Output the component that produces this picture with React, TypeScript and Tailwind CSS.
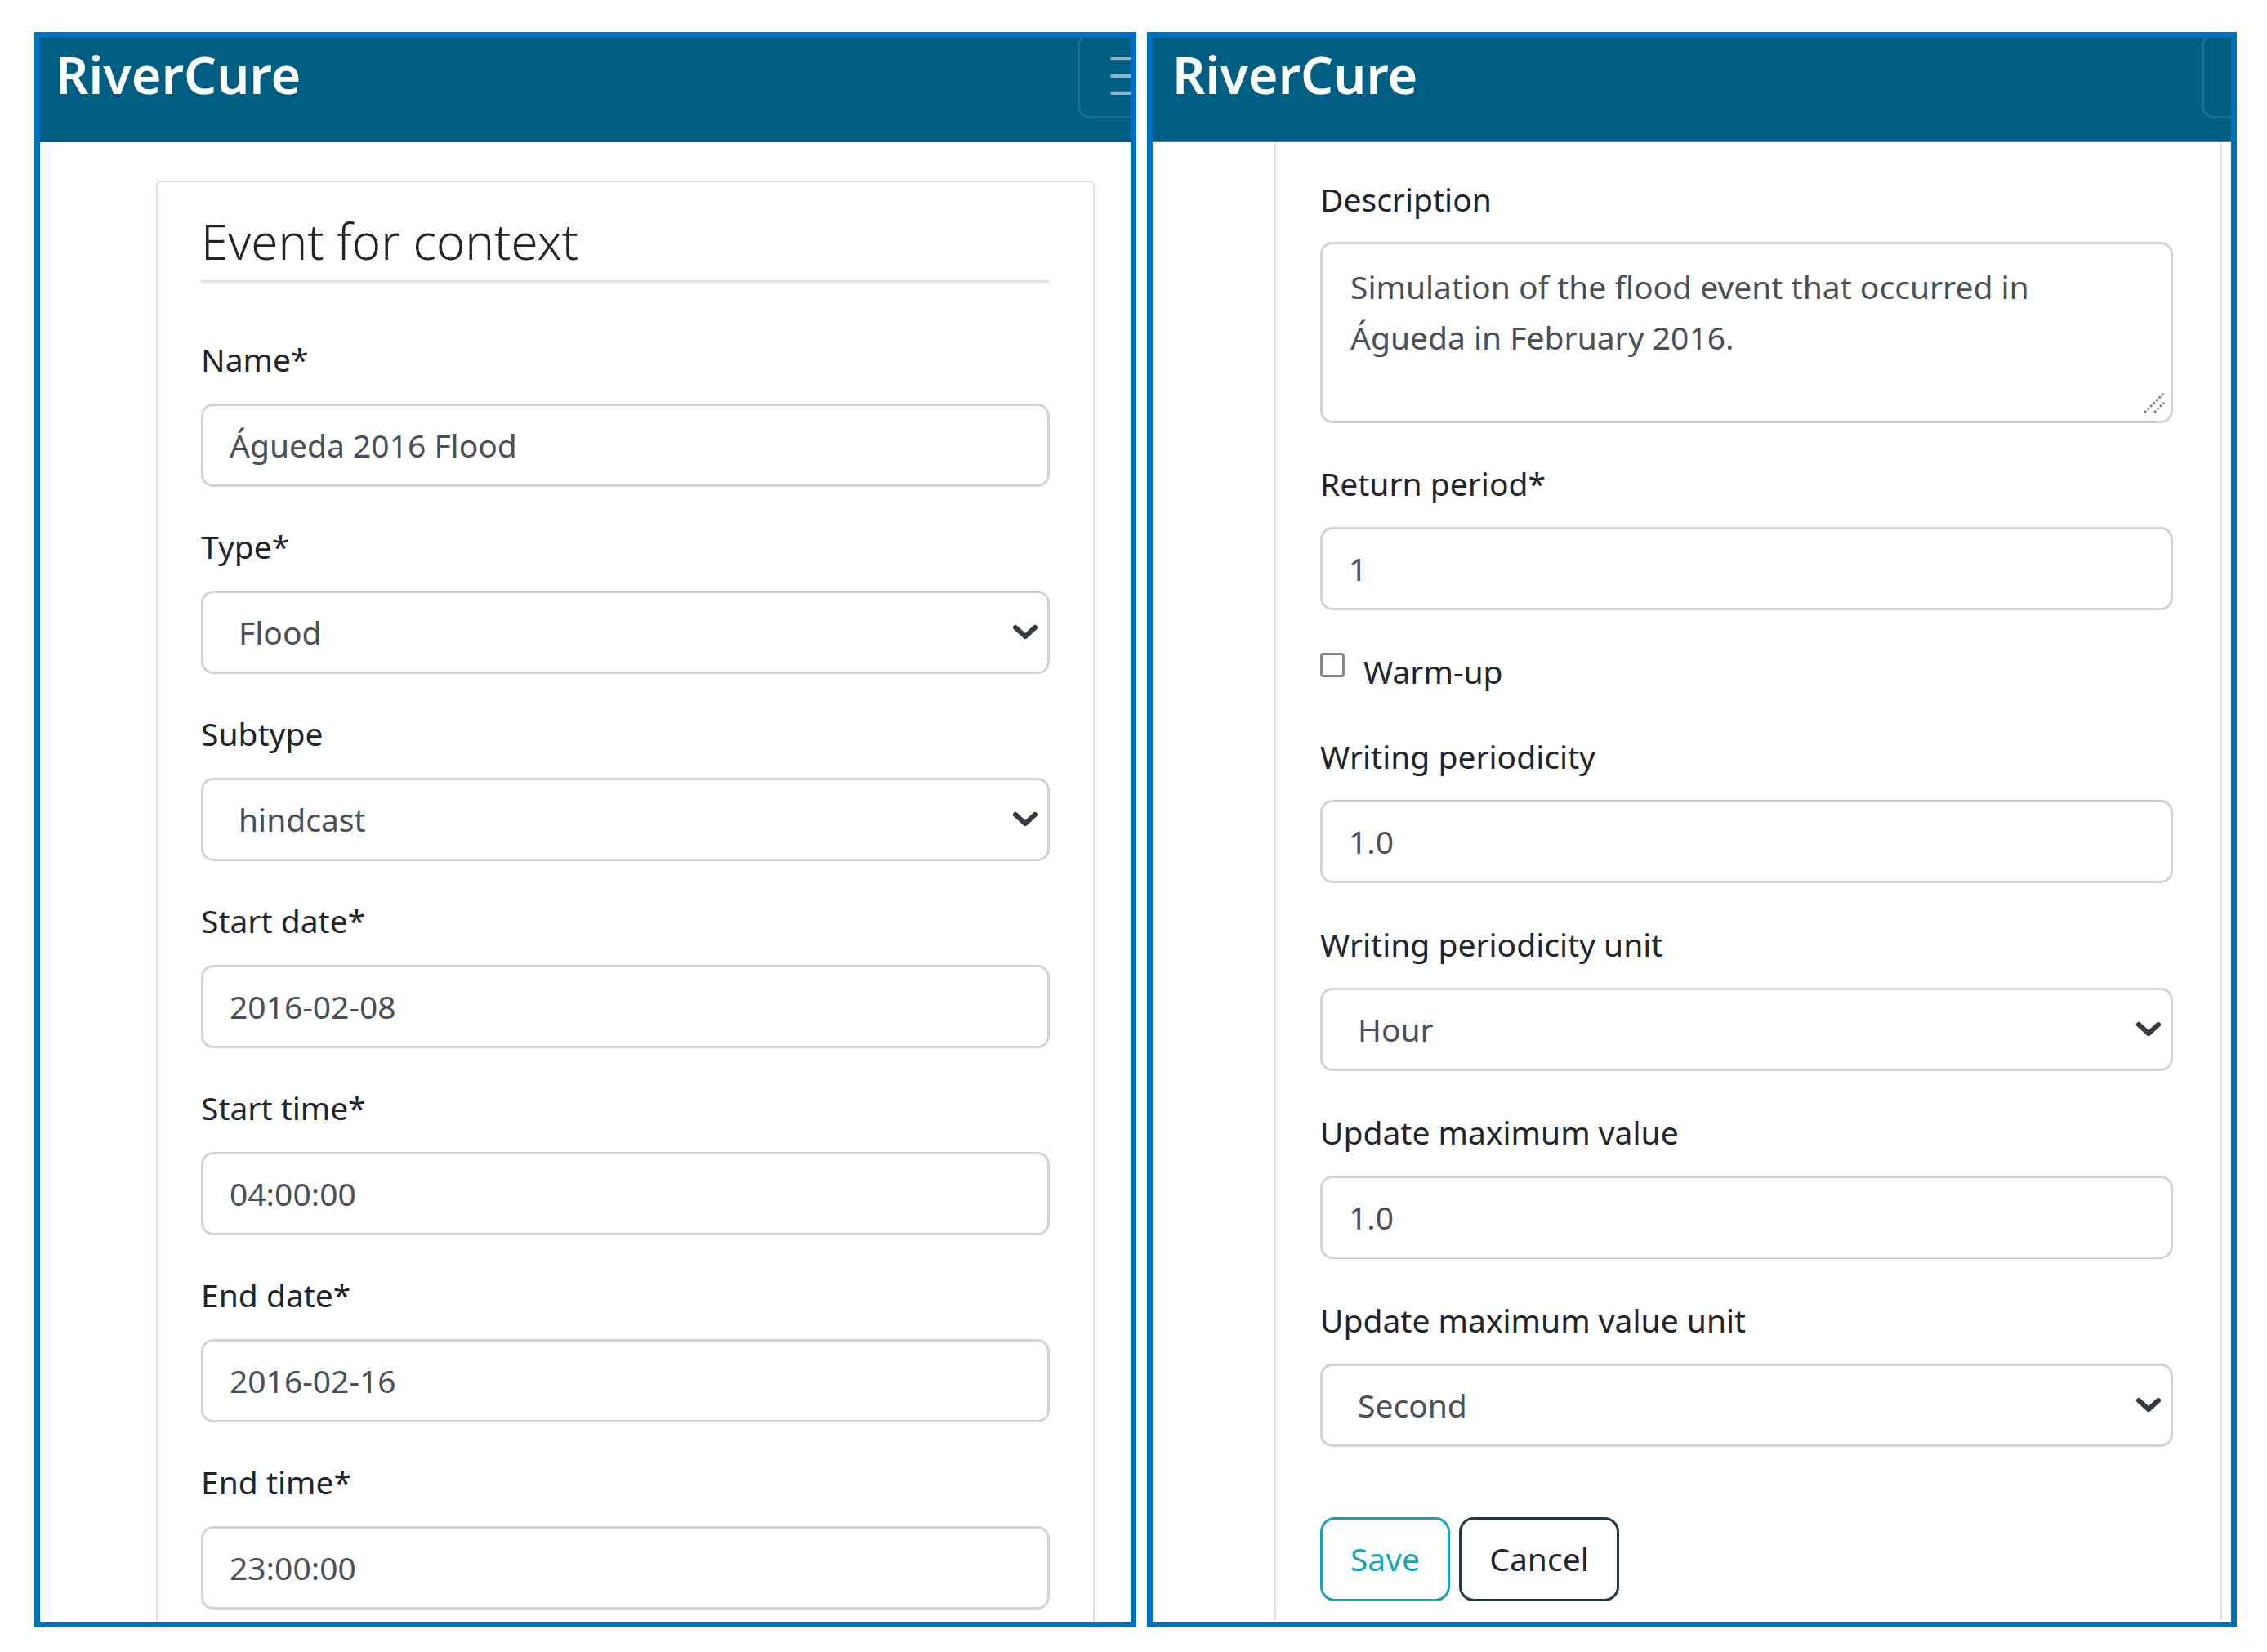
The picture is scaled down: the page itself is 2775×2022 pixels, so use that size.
import React from "react";

const Chevron = () => (
  <svg width="34" height="22" viewBox="0 0 34 22" className="shrink-0">
    <path d="M5 5 17 16 29 5" fill="none" stroke="#343a40" strokeWidth="6" strokeLinecap="round" strokeLinejoin="round" />
  </svg>
);

const Label = ({ children }: { children: React.ReactNode }) => (
  <div className="h-[62px] text-[39px] leading-[62px] text-[#212529]">{children}</div>
);

const Field = ({
  label,
  value,
  select,
  first,
  gap = "mt-[44px]",
  lgap = "mt-[22px]",
}: {
  label: string;
  value: string;
  select?: boolean;
  first?: boolean;
  gap?: string;
  lgap?: string;
}) => (
  <div className={first ? "" : gap}>
    <Label>{label}</Label>
    <div
      className={
        "flex h-[102px] items-center justify-between rounded-[15px] border-[3px] border-[#ced4da] bg-white text-[39px] text-[#495057] " +
        lgap +
        " " +
        (select ? "pl-[43px] pr-[10px]" : "pl-[32px]")
      }
    >
      <span>{value}</span>
      {select && <Chevron />}
    </div>
  </div>
);

const Toggler = ({ mr }: { mr: string }) => (
  <div className={"mt-[-5px] flex h-[104px] w-[146px] shrink-0 items-center rounded-[15px] border-[3px] border-[#1b6f90] pl-[29px] " + mr}>
    <svg width="78" height="78" viewBox="0 0 30 30">
      <path d="M4 7h22M4 15h22M4 23h22" stroke="rgba(255,255,255,0.55)" strokeWidth="1.6" strokeLinecap="round" />
    </svg>
  </div>
);

const Header = ({ pl, mr, line }: { pl: string; mr: string; line?: boolean }) => (
  <header
    className={
      "flex h-[128px] items-start justify-between overflow-hidden bg-[#005e82] " +
      (line ? "border-b-2 border-[#3f86a3]" : "")
    }
  >
    <div className={"pt-[13px] text-[63px] font-semibold leading-[64px] text-white " + pl}>RiverCure</div>
    <Toggler mr={mr} />
  </header>
);

const LeftPanel = () => (
  <section className="h-[1953px] w-[1349px] shrink-0 overflow-hidden border-[7px] border-[#0070c0]">
    <Header pl="pl-[19px]" mr="mr-[-81px]" />
    <div className="h-[1811px] overflow-hidden">
      <div className="ml-[142px] mt-[47px] w-[1149px] rounded-t-[6px] border-2 border-b-0 border-[#dfdfdf] px-[53px] pb-[40px] pt-[37px]">
        <h3 className="text-[60px] font-light leading-[70px] text-[#212529]">Event for context</h3>
        <hr className="mt-[13px] border-0 border-t-[3px] border-[#e1e3e5]" />
        <div className="mt-[63px]">
          <Field first label="Name*" value="Águeda 2016 Flood" lgap="mt-[23px]" />
          <Field label="Type*" value="Flood" select gap="mt-[42px]" lgap="mt-[23px]" />
          <Field label="Subtype" value="hindcast" select gap="mt-[42px]" lgap="mt-[23px]" />
          <Field label="Start date*" value="2016-02-08" gap="mt-[42px]" lgap="mt-[23px]" />
          <Field label="Start time*" value="04:00:00" gap="mt-[42px]" lgap="mt-[23px]" />
          <Field label="End date*" value="2016-02-16" gap="mt-[42px]" lgap="mt-[23px]" />
          <Field label="End time*" value="23:00:00" gap="mt-[42px]" lgap="mt-[23px]" />
        </div>
      </div>
    </div>
  </section>
);

const RightPanel = () => (
  <section className="h-[1953px] w-[1334px] shrink-0 overflow-hidden border-[7px] border-[#0070c0]">
    <Header pl="pl-[24px]" mr="mr-[-110px]" line />
    <div className="h-[1809px] overflow-hidden">
      <div className="ml-[149px] h-[1809px] w-[1160px] border-x-2 border-[#dfdfdf] pl-[54px] pr-[58px] pt-[39px]">
        <Label>Description</Label>
        <div className="relative mt-[21px] h-[222px] rounded-[15px] border-[3px] border-[#ced4da] pl-[34px] pt-[21px] text-[39px] leading-[62px] text-[#495057]">
          <div className="whitespace-nowrap">Simulation of the flood event that occurred in</div>
          <div className="whitespace-nowrap">Águeda in February 2016.</div>
          <svg width="30" height="30" viewBox="0 0 30 30" className="absolute bottom-[7px] right-[5px]">
            <path d="M3 27 27 3M15 27 27 15" stroke="#7a7a7a" strokeWidth="2.5" strokeDasharray="3 2" />
          </svg>
        </div>
        <div className="mt-[43px]">
          <Field first label="Return period*" value="1" />
        </div>
        <div className="mt-[44px] flex h-[62px] items-start">
          <div className="mt-[8px] h-[30px] w-[30px] rounded-[4px] border-[3px] border-[#858585] bg-white" />
          <span className="ml-[23px] text-[39px] leading-[62px] text-[#212529]">Warm-up</span>
        </div>
        <div className="mt-[42px]">
          <Field first label="Writing periodicity" value="1.0" />
          <Field label="Writing periodicity unit" value="Hour" select />
          <Field label="Update maximum value" value="1.0" />
          <Field label="Update maximum value unit" value="Second" select />
        </div>
        <div className="mt-[86px] flex gap-[11px]">
          <div className="flex h-[103px] w-[159px] items-center justify-center rounded-[18px] border-[3px] border-[#17a2b8] text-[39px] text-[#17a2b8]">
            Save
          </div>
          <div className="flex h-[103px] w-[196px] items-center justify-center rounded-[18px] border-[3px] border-[#1e3a4c] text-[39px] text-[#212529]">
            Cancel
          </div>
        </div>
      </div>
    </div>
  </section>
);

export default function App() {
  return (
    <div className="flex h-[2022px] w-[2775px] items-start gap-[13px] overflow-hidden bg-white pl-[42px] pt-[39px] font-['Noto_Sans',sans-serif]">
      <LeftPanel />
      <RightPanel />
    </div>
  );
}
